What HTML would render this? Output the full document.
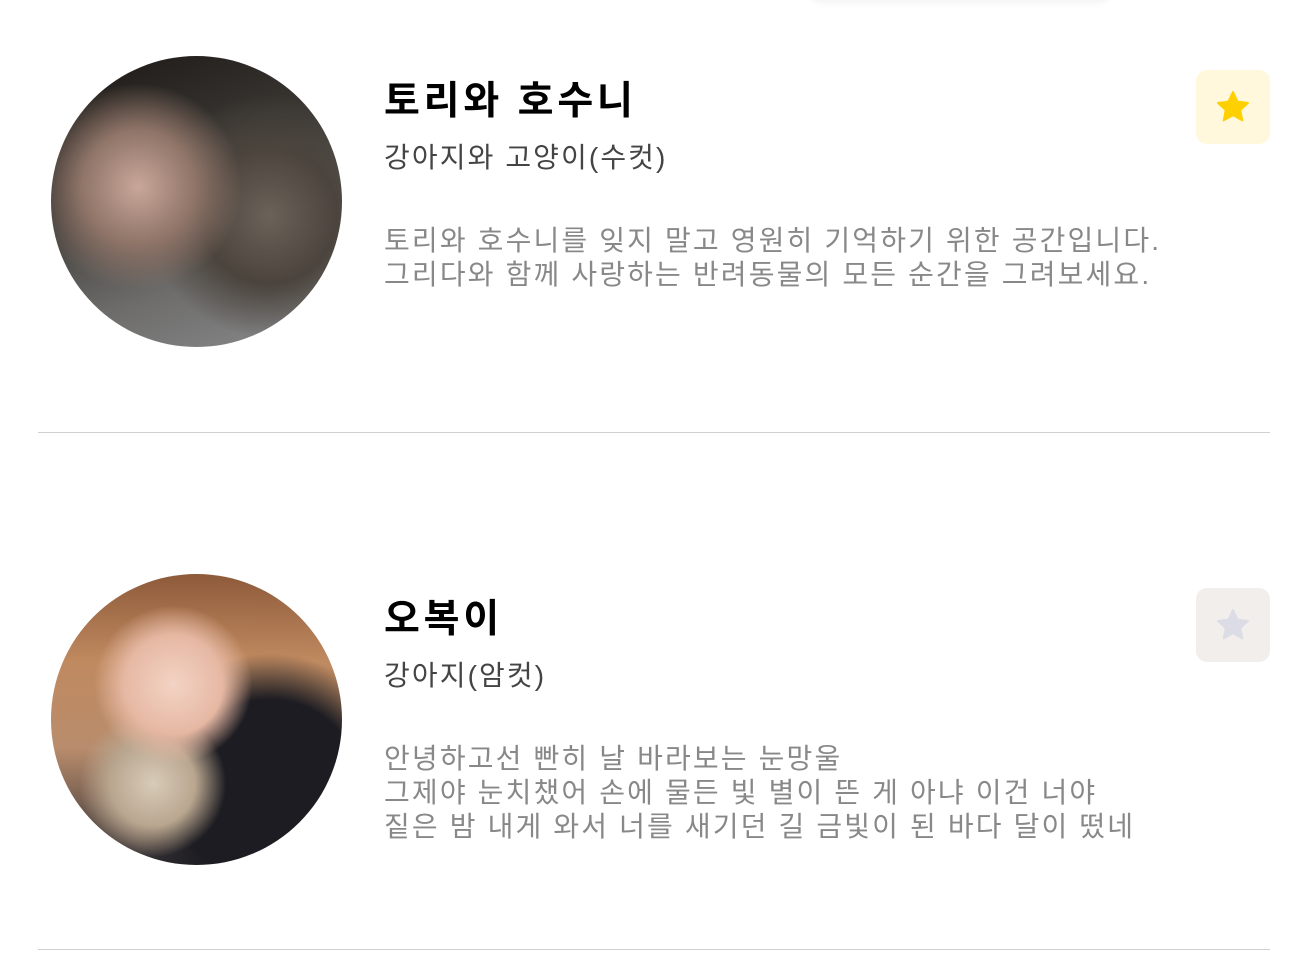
<!DOCTYPE html>
<html><head><meta charset="utf-8"><style>
body{margin:0;width:1306px;height:977px;background:#fff;position:relative;overflow:hidden;font-family:"Liberation Sans","Noto Sans CJK KR",sans-serif}
.shadow{position:absolute;left:810px;top:-20px;width:300px;height:20px;box-shadow:0 2px 8px rgba(0,0,0,.06);border-radius:10px}
.av{position:absolute;left:51px;width:291px;height:291px;border-radius:50%;overflow:hidden}
.t{position:absolute;left:384px;font-size:39px;font-weight:bold;color:#000;line-height:1;letter-spacing:3.8px}
.s{position:absolute;left:384px;font-size:28px;color:#444;line-height:1;letter-spacing:2.1px}
.d{position:absolute;left:384px;font-size:28px;color:#888;line-height:34px;white-space:nowrap;letter-spacing:2.15px}
.box{position:absolute;left:1196px;width:74px;height:74px;border-radius:11px;display:flex;align-items:center;justify-content:center}
.hr{position:absolute;left:38px;width:1232px;height:1px;background:#d0d0d0}
</style></head><body>
<div class="shadow"></div>
<div class="av" style="top:56px;background:radial-gradient(circle at 30% 45%,#c9a79a 0,#8f7468 22%,transparent 40%),radial-gradient(circle at 75% 55%,#6b6259 0,#4b443d 25%,transparent 45%),linear-gradient(160deg,#1a1714 0%,#3d3a36 40%,#6d6c6a 70%,#8a8b8e 100%)"></div>
<div class="t" style="top:82px">토리와 호수니</div>
<div class="s" style="top:144px">강아지와 고양이(수컷)</div>
<div class="d" style="top:224px">토리와 호수니를 잊지 말고 영원히 기억하기 위한 공간입니다.<br>그리다와 함께 사랑하는 반려동물의 모든 순간을 그려보세요.</div>
<div class="box" style="top:70px;background:#fff8dc"><svg width="38" height="38" viewBox="0 0 24 24"><path d="M12 2.5l2.9 6.1 6.6.8-4.9 4.5 1.3 6.6L12 17.2l-5.9 3.3 1.3-6.6-4.9-4.5 6.6-.8z" fill="#ffd000" stroke="#ffd000" stroke-linejoin="round" stroke-width="1.2"/></svg></div>
<div class="hr" style="top:432px"></div>
<div class="av" style="top:574px;background:radial-gradient(circle at 42% 38%,#f3d3c4 0,#e6b8a3 20%,transparent 32%),radial-gradient(circle at 35% 72%,#d8cbb9 0,#b9a68f 15%,transparent 26%),radial-gradient(circle at 75% 75%,#1c1c22 0,#1c1c22 30%,transparent 45%),linear-gradient(180deg,#8d5a3a 0%,#c08a60 30%,#b88c6c 60%,#2a2a30 100%)"></div>
<div class="t" style="top:600px">오복이</div>
<div class="s" style="top:662px">강아지(암컷)</div>
<div class="d" style="top:742px">안녕하고선 빤히 날 바라보는 눈망울<br>그제야 눈치챘어 손에 물든 빛 별이 뜬 게 아냐 이건 너야<br>짙은 밤 내게 와서 너를 새기던 길 금빛이 된 바다 달이 떴네</div>
<div class="box" style="top:588px;background:#f2eeeb"><svg width="38" height="38" viewBox="0 0 24 24"><path d="M12 2.5l2.9 6.1 6.6.8-4.9 4.5 1.3 6.6L12 17.2l-5.9 3.3 1.3-6.6-4.9-4.5 6.6-.8z" fill="#dcdce6" stroke="#dcdce6" stroke-linejoin="round" stroke-width="1.2"/></svg></div>
<div class="hr" style="top:949px"></div>
</body></html>
